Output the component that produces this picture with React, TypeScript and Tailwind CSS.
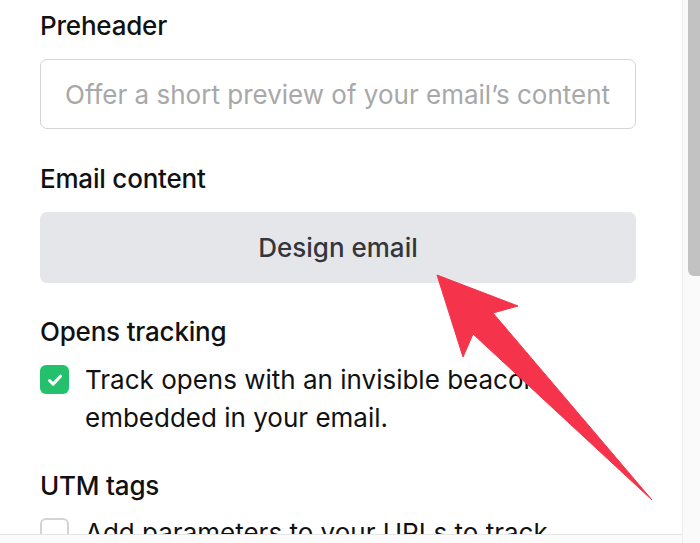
import React from "react";

function Label({ children }: { children: React.ReactNode }) {
  return <div className="text-[26px] leading-8 font-medium text-[#111111] tracking-[-0.2px]">{children}</div>;
}

export default function App() {
  return (
    <div className="relative w-[700px] h-[543px] overflow-hidden bg-white flex" style={{ fontFamily: "Inter, 'Noto Sans', sans-serif" }}>
      <div className="w-[682px] h-[543px] flex flex-col">
        <div className="h-[535px] overflow-hidden border-b border-[#e6e6e6] pl-10 pr-[46px] pt-[10px]">
          <Label>Preheader</Label>
          <div className="mt-[17px] h-[70px] rounded-[7px] border border-[#d4d4d8] flex items-center pl-6 text-[26px] text-[#a8a8a8]">
            Offer a short preview of your email’s content
          </div>

          <div className="mt-[34px]">
            <Label>Email content</Label>
          </div>
          <div className="mt-[17px] h-[71px] rounded-[7px] bg-[#e5e6ea] flex items-center justify-center text-[26px] font-medium text-[#34363b]">
            Design email
          </div>

          <div className="mt-[33px]">
            <Label>Opens tracking</Label>
          </div>
          <div className="mt-[13px] flex items-start gap-4">
            <div className="mt-[4px] w-[29px] h-[29px] shrink-0 rounded-[6px] bg-[#23c16b] flex items-center justify-center">
              <svg width="20" height="20" viewBox="0 0 20 20" fill="none">
                <path d="M4.5 10.5l3.6 3.6L15.5 6.2" stroke="white" strokeWidth="3" strokeLinecap="round" strokeLinejoin="round" />
              </svg>
            </div>
            <div className="text-[26px] leading-[38px] text-[#111111]">
              Track opens with an invisible beacon embedded in your email.
            </div>
          </div>

          <div className="mt-[33px]">
            <Label>UTM tags</Label>
          </div>
          <div className="mt-[12px] flex items-start gap-4">
            <div className="mt-[4px] w-[29px] h-[29px] shrink-0 rounded-[6px] border-2 border-[#d4d4d8] bg-white" />
            <div className="text-[26px] leading-[38px] text-[#111111]">
              Add parameters to your URLs to track campaign performance.
            </div>
          </div>
        </div>
        <div className="flex-1 bg-[#fbfbfb]" />
      </div>
      <div className="relative w-[18px] h-[543px] border-l border-[#ececec] bg-[#fafafa]">
        <div className="absolute left-[5px] right-0 top-0 h-[276px] rounded-bl-[6px] bg-[#c2c2c2]" />
      </div>

      <svg className="absolute left-0 top-0 pointer-events-none" width="700" height="543" viewBox="0 0 700 543">
        <polygon
          points="437,275 518,306 493,313 652,500 473,334 463,357"
          fill="#f5334b"
          stroke="#f5334b"
          strokeWidth="1"
          strokeLinejoin="round"
        />
      </svg>
    </div>
  );
}
